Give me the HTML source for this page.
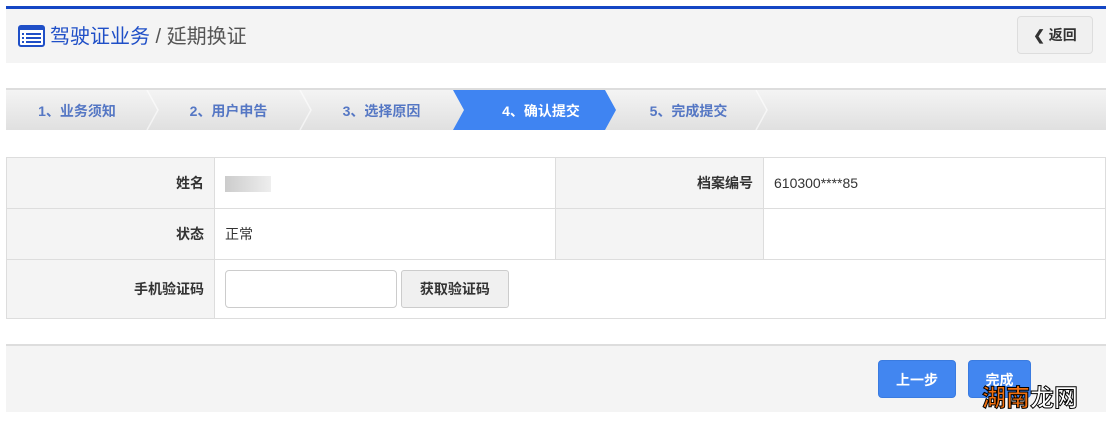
<!DOCTYPE html>
<html><head><meta charset="utf-8"><style>
*{margin:0;padding:0;box-sizing:border-box}
body{width:1113px;height:421px;background:#fff;font-family:"Liberation Sans","Noto Sans CJK SC",sans-serif;position:relative;overflow:hidden}
.abs{position:absolute}
.hdr{left:6px;top:6px;width:1100px;height:57px;background:#f4f4f4;border-top:3px solid #1446c4}
.title{left:18px;top:24px;font-size:20px;color:#555;line-height:26px}
.title b{font-weight:normal;color:#1f4fc7}
.back{left:1017px;top:16px;width:76px;height:38px;border:1px solid #ddd;border-radius:4px;background:#f0f0f0;font-size:14px;font-weight:bold;color:#333;text-align:center;line-height:36px}
.steps{left:6px;top:88px;width:1100px;height:42px;background:linear-gradient(#f4f4f4,#e0e0e0);border-top:2px solid #ddd}
.st{position:absolute;top:0;height:40px;line-height:42px;font-size:14px;font-weight:bold;color:#5577c4;text-align:center}
table{position:absolute;left:6px;top:157px;width:1100px;border-collapse:collapse;font-size:14px;color:#333}
td{border:1px solid #ddd;padding:0 10px}
td.l{background:#f4f4f4;text-align:right;font-weight:bold;width:208px}
.foot{left:6px;top:344px;width:1100px;height:68px;background:#f4f4f4;border-top:2px solid #ddd}
.btn{top:360px;height:38px;border-radius:4px;background:#4286f0;color:#fff;font-size:14px;font-weight:bold;text-align:center;line-height:38px;border:1px solid #3a7be0}
</style></head><body>
<div class="abs hdr"></div>
<div class="abs title"><svg width="27" height="22" viewBox="0 0 27 22" style="vertical-align:-4px;margin-right:5px"><rect x="1" y="1" width="25" height="20" rx="2" fill="#fff" stroke="#1f4fc7" stroke-width="2"/><rect x="1" y="1" width="25" height="4" fill="#1f4fc7"/><g fill="#1f4fc7"><rect x="4" y="8" width="2" height="2"/><rect x="8" y="8" width="15" height="2"/><rect x="4" y="12" width="2" height="2"/><rect x="8" y="12" width="15" height="2"/><rect x="4" y="16" width="2" height="2"/><rect x="8" y="16" width="15" height="2"/></g></svg><b>驾驶证业务</b> / 延期换证</div>
<div class="abs back">&#10094; 返回</div>
<div class="abs steps">
<div class="st" style="left:0;width:142px">1、业务须知</div>
<div class="st" style="left:150px;width:145px">2、用户申告</div>
<div class="st" style="left:303px;width:145px">3、选择原因</div>
<div class="st" style="left:610px;width:145px">5、完成提交</div>
<svg class="abs" style="left:0;top:0" width="1100" height="40"><g stroke="#fff" stroke-width="1.5" fill="none" opacity=".6"><polyline points="141,0 152,20 141,40"/><polyline points="294,0 305,20 294,40"/><polyline points="750,0 761,20 750,40"/></g><polygon points="447,0 599,0 610,20 599,40 447,40 458,20" fill="#3f84f2"/></svg>
<div class="st" style="left:460px;width:150px;color:#fff">4、确认提交</div>
</div>
<table>
<tr style="height:51px"><td class="l">姓名</td><td style="width:341px"><span style="display:inline-block;width:46px;height:16px;background:linear-gradient(90deg,#ccc,#ddd,#eee);vertical-align:middle"></span></td><td class="l">档案编号</td><td>610300****85</td></tr>
<tr style="height:51px"><td class="l">状态</td><td>正常</td><td class="l"></td><td></td></tr>
<tr style="height:59px"><td class="l">手机验证码</td><td colspan="3"><span style="display:inline-block;width:172px;height:38px;border:1px solid #ccc;border-radius:4px;vertical-align:middle;background:#fff"></span> <span style="display:inline-block;width:108px;height:38px;border:1px solid #ccc;border-radius:3px;background:#f0f0f0;vertical-align:middle;text-align:center;line-height:36px;font-weight:bold">获取验证码</span></td></tr>
</table>
<div class="abs foot"></div>
<div class="abs btn" style="left:878px;width:78px">上一步</div>
<div class="abs btn" style="left:968px;width:63px">完成</div>
<div class="abs" style="left:982px;top:378px;font-size:24px;font-weight:bold;color:#f07010;-webkit-text-stroke:1px #000">湖南<span style="color:#fff">龙网</span></div>
</body></html>
